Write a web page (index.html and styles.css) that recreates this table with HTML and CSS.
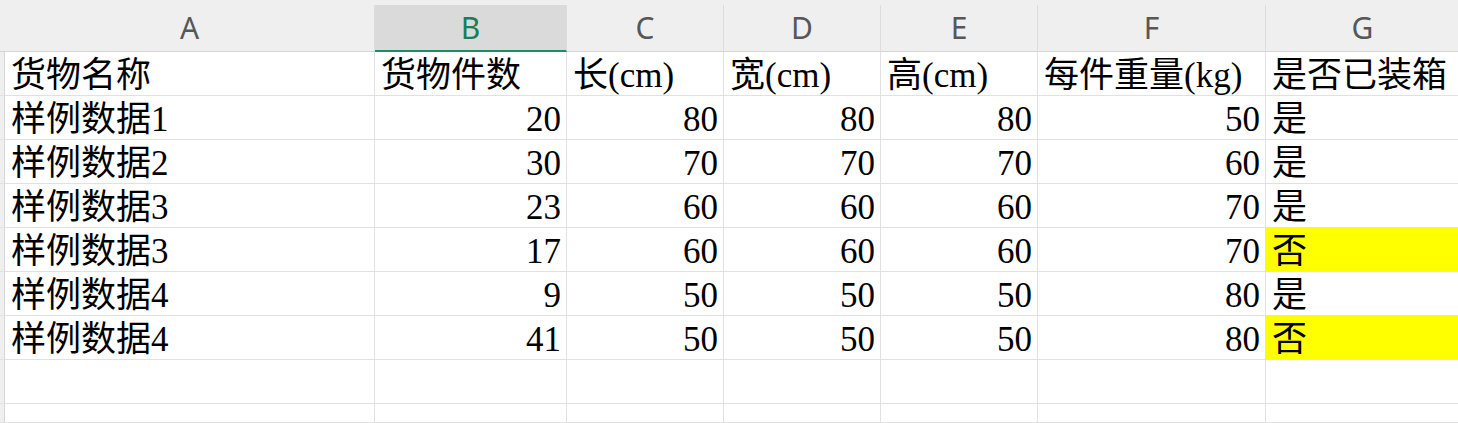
FILE: index.html
```html
<!DOCTYPE html>
<html lang="zh">
<head>
<meta charset="utf-8">
<title>Sheet</title>
<link rel="stylesheet" href="styles.css">
</head>
<body>
<div class="sheet">
  <div class="corner"></div>
  <div class="colhead">A</div>
  <div class="colhead selected">B</div>
  <div class="colhead">C</div>
  <div class="colhead">D</div>
  <div class="colhead">E</div>
  <div class="colhead">F</div>
  <div class="colhead last">G</div>

  <div class="gutter"></div>
  <div class="cell">货物名称</div>
  <div class="cell">货物件数</div>
  <div class="cell">长(cm)</div>
  <div class="cell">宽(cm)</div>
  <div class="cell">高(cm)</div>
  <div class="cell">每件重量(kg)</div>
  <div class="cell last">是否已装箱</div>

  <div class="gutter"></div>
  <div class="cell">样例数据1</div>
  <div class="cell num">20</div>
  <div class="cell num">80</div>
  <div class="cell num">80</div>
  <div class="cell num">80</div>
  <div class="cell num">50</div>
  <div class="cell last">是</div>

  <div class="gutter"></div>
  <div class="cell">样例数据2</div>
  <div class="cell num">30</div>
  <div class="cell num">70</div>
  <div class="cell num">70</div>
  <div class="cell num">70</div>
  <div class="cell num">60</div>
  <div class="cell last">是</div>

  <div class="gutter"></div>
  <div class="cell">样例数据3</div>
  <div class="cell num">23</div>
  <div class="cell num">60</div>
  <div class="cell num">60</div>
  <div class="cell num">60</div>
  <div class="cell num">70</div>
  <div class="cell last">是</div>

  <div class="gutter"></div>
  <div class="cell">样例数据3</div>
  <div class="cell num">17</div>
  <div class="cell num">60</div>
  <div class="cell num">60</div>
  <div class="cell num">60</div>
  <div class="cell num">70</div>
  <div class="cell last mark">否</div>

  <div class="gutter"></div>
  <div class="cell">样例数据4</div>
  <div class="cell num">9</div>
  <div class="cell num">50</div>
  <div class="cell num">50</div>
  <div class="cell num">50</div>
  <div class="cell num">80</div>
  <div class="cell last">是</div>

  <div class="gutter"></div>
  <div class="cell">样例数据4</div>
  <div class="cell num">41</div>
  <div class="cell num">50</div>
  <div class="cell num">50</div>
  <div class="cell num">50</div>
  <div class="cell num">80</div>
  <div class="cell last mark">否</div>

  <div class="gutter"></div>
  <div class="cell"></div>
  <div class="cell"></div>
  <div class="cell"></div>
  <div class="cell"></div>
  <div class="cell"></div>
  <div class="cell"></div>
  <div class="cell last"></div>

  <div class="gutter"></div>
  <div class="cell"></div>
  <div class="cell"></div>
  <div class="cell"></div>
  <div class="cell"></div>
  <div class="cell"></div>
  <div class="cell"></div>
  <div class="cell last"></div>
</div>
</body>
</html>
```

FILE: styles.css
```css
html, body {
  margin: 0;
  padding: 0;
  background: #efefef;
  overflow: hidden;
  height: 423px;
}

.sheet {
  display: grid;
  grid-template-columns: 5px 370px 192px 157px 157px 157px 228px 193px;
  grid-template-rows: 52px repeat(8, 44px) 19px;
  width: 1458px;
}

.corner {
  background: #efefef;
  border-bottom: 1px solid #d4d4d4;
  box-sizing: border-box;
}

.colhead {
  box-sizing: border-box;
  margin-top: 5px;
  background: #efefef;
  border-right: 1px solid #dcdcdc;
  border-bottom: 1px solid #d4d4d4;
  display: flex;
  align-items: center;
  justify-content: center;
  font-family: "Noto Sans", "Open Sans", sans-serif;
  font-size: 30px;
  line-height: 1;
  color: #575757;
}

.colhead.selected {
  background: #dadada;
  color: #1a7f52;
  border-bottom: 2px solid #1f8f5f;
}

.colhead.last {
  border-right: none;
}

.gutter {
  box-sizing: border-box;
  background: #efefef;
  border-right: 1px solid #d6d6d6;
  border-bottom: 1px solid #e2e2e2;
}

.cell {
  box-sizing: border-box;
  background: #ffffff;
  border-right: 1px solid #e1e1e1;
  border-bottom: 1px solid #e1e1e1;
  padding: 4px 5px 0 6px;
  font-family: "Liberation Serif", "Noto Sans CJK SC", serif;
  font-size: 35px;
  line-height: 39px;
  color: #000;
  white-space: nowrap;
  overflow: hidden;
}

.cell.num {
  text-align: right;
}

.cell.last {
  border-right: none;
}

.cell.mark {
  background: #ffff00;
}
```
